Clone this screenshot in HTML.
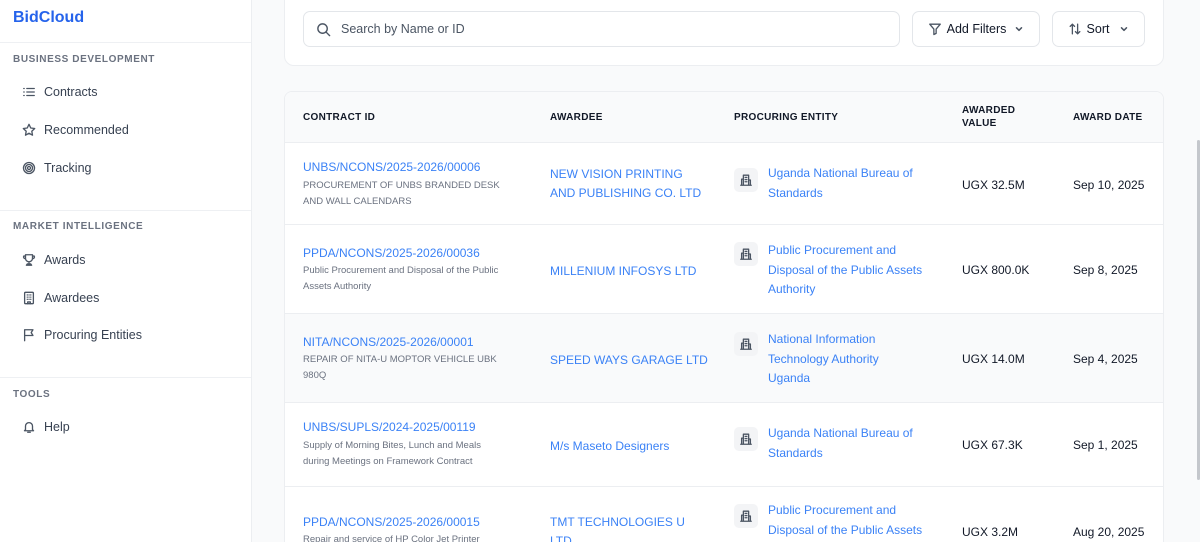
<!DOCTYPE html>
<html><head><meta charset="utf-8"><style>
*{box-sizing:border-box;margin:0;padding:0}
html,body{width:1200px;height:542px;overflow:hidden}
body{background:#f9fafb;font-family:"Liberation Sans",sans-serif;color:#111827;position:relative}
.sb{position:absolute;left:0;top:0;width:252px;height:542px;background:#fff;border-right:1px solid #eceef1}
.logo{position:absolute;left:13px;top:9px;font-size:16px;font-weight:700;color:#2563eb}
.hr{position:absolute;left:0;width:251px;height:1px;background:#eef0f3}
.lab{position:absolute;left:13px;font-size:10px;font-weight:700;color:#6b7280;letter-spacing:.6px}
.it{position:absolute;left:22px;font-size:12.5px;color:#374151;display:flex;align-items:center}
.it svg{width:14px;height:14px;margin-right:8px;stroke:#4b5563;fill:none;stroke-width:1.5;stroke-linecap:round;stroke-linejoin:round}
.top{position:absolute;left:284px;top:-10px;width:880px;height:76px;background:#fff;border:1px solid #eceef1;border-radius:10px}
.inp{position:absolute;left:303px;top:11px;width:597px;height:36px;border:1px solid #e3e6ea;border-radius:7px;background:#fff;font-size:12.5px;color:#4b5563;display:flex;align-items:center;padding-left:37px}
.btn{position:absolute;top:11px;height:36px;border:1px solid #e3e6ea;border-radius:7px;background:#fff;font-size:12.5px;color:#111827;display:flex;align-items:center;justify-content:center}
svg.i{fill:none;stroke:#4b5563;stroke-width:1.5;stroke-linecap:round;stroke-linejoin:round}
.tbl{position:absolute;left:284px;top:91px;width:880px;height:451px;background:#fff;border:1px solid #eceef1;border-bottom:0;border-radius:8px 8px 0 0;overflow:hidden}
.th{position:absolute;left:0;top:0;width:880px;height:51px;background:#f9fafb;border-bottom:1px solid #eceef1}
.h{position:absolute;font-size:10px;font-weight:700;color:#111827;letter-spacing:.3px;line-height:12.5px}
.row{position:absolute;left:0;width:880px;border-bottom:1px solid #eceef1}
.c{position:absolute;white-space:nowrap}
.id{font-size:12px;color:#3b82f6;left:18px}
.ds{font-size:9.5px;color:#6b7280;line-height:15.5px;left:18px}
.aw{left:265px;font-size:12px;color:#3b82f6;line-height:19px}
.ic{left:449px;width:24px;height:24px;background:#f3f4f6;border-radius:5px}
.ic svg{position:absolute;left:5px;top:5px}
.en{left:483px;font-size:12px;color:#3b82f6;line-height:19.5px}
.v{left:677px;font-size:12px;color:#111827}
.d{left:788px;font-size:12px;color:#111827}
</style></head><body>
<div class="sb">
<div class="logo">BidCloud</div>
<div class="hr" style="top:42px"></div>
<div class="lab" style="top:54px">BUSINESS DEVELOPMENT</div>
<div class="it" style="top:85px"><svg viewBox="0 0 16 16"><path d="M2 4h.5M2 8h.5M2 12h.5M5.5 4H14M5.5 8H14M5.5 12H14"/></svg>Contracts</div>
<div class="it" style="top:123px"><svg viewBox="0 0 16 16"><path d="M8 1.5l2 4.2 4.5.6-3.3 3.1.8 4.5L8 11.7 4 13.9l.8-4.5L1.5 6.3l4.5-.6z"/></svg>Recommended</div>
<div class="it" style="top:161px"><svg viewBox="0 0 16 16"><circle cx="8" cy="8" r="6.3"/><circle cx="8" cy="8" r="4"/><circle cx="8" cy="8" r="1.7"/></svg>Tracking</div>
<div class="hr" style="top:210px"></div>
<div class="lab" style="top:221px">MARKET INTELLIGENCE</div>
<div class="it" style="top:253px"><svg viewBox="0 0 16 16"><path d="M4 2h8v4a4 4 0 0 1-8 0zM4 3.5H2a2 2 0 0 0 2 3M12 3.5h2a2 2 0 0 1-2 3M8 10v2.5M5 14h6l-1-1.5H6z"/></svg>Awards</div>
<div class="it" style="top:291px"><svg viewBox="0 0 16 16"><rect x="3" y="1.5" width="10" height="13" rx="1"/><path d="M6 4.5h.1M8 4.5h.1M10 4.5h.1M6 7h.1M8 7h.1M10 7h.1M6 9.5h.1M8 9.5h.1M10 9.5h.1M6.5 14.5v-2h3v2"/></svg>Awardees</div>
<div class="it" style="top:328px"><svg viewBox="0 0 16 16"><path d="M3 14.5V2h9.5l-2 3.3 2 3.3H3"/></svg>Procuring Entities</div>
<div class="hr" style="top:377px"></div>
<div class="lab" style="top:389px">TOOLS</div>
<div class="it" style="top:420px"><svg viewBox="0 0 16 16"><path d="M4 11V7a4 4 0 0 1 8 0v4l1.2 1.3H2.8zM6.5 14h3"/></svg>Help</div>
</div>

<div class="top"></div>
<div class="inp"><svg class="i" style="position:absolute;left:12px;top:10px" width="15" height="15" viewBox="0 0 16 16"><circle cx="7" cy="7" r="5"/><path d="M11 11l3.5 3.5"/></svg>Search by Name or ID</div>
<div class="btn" style="left:912px;width:128px"><svg class="i" width="14" height="14" viewBox="0 0 16 16" style="margin-right:5px"><path d="M2 2.5h12l-4.7 5.6V13l-2.6 1.3V8.1z"/></svg>Add Filters<svg class="i" width="10" height="10" viewBox="0 0 10 10" style="margin-left:8px"><path d="M2.5 3.8L5 6.3l2.5-2.5"/></svg></div>
<div class="btn" style="left:1052px;width:93px"><svg class="i" width="14" height="14" viewBox="0 0 16 16" style="margin-right:5px"><path d="M5 13.5V2.5M2.5 5L5 2.5 7.5 5M11 2.5v11M8.5 11l2.5 2.5 2.5-2.5"/></svg>Sort<svg class="i" width="10" height="10" viewBox="0 0 10 10" style="margin-left:10px"><path d="M2.5 3.8L5 6.3l2.5-2.5"/></svg></div>

<div class="tbl">
<div class="th">
<div class="h" style="left:18px;top:20px">CONTRACT ID</div>
<div class="h" style="left:265px;top:20px">AWARDEE</div>
<div class="h" style="left:449px;top:20px">PROCURING ENTITY</div>
<div class="h" style="left:677px;top:13px">AWARDED<br>VALUE</div>
<div class="h" style="left:788px;top:20px">AWARD DATE</div>
</div>

<div class="row" style="top:51px;height:82px">
<div class="c id" style="top:17px">UNBS/NCONS/2025-2026/00006</div>
<div class="c ds" style="top:35px">PROCUREMENT OF UNBS BRANDED DESK<br>AND WALL CALENDARS</div>
<div class="c aw" style="top:22px">NEW VISION PRINTING<br>AND PUBLISHING CO. LTD</div>
<div class="c ic" style="top:25px"><svg class="i" width="14" height="14" viewBox="0 0 16 16"><path d="M5 14V2.5h6V14M3 14V7h2M11 8h2v6M2 14h12M7 5h2M7 7.5h2M7 10h2"/></svg></div>
<div class="c en" style="top:21px">Uganda National Bureau of<br>Standards</div>
<div class="c v" style="top:35px">UGX 32.5M</div>
<div class="c d" style="top:35px">Sep 10, 2025</div>
</div>

<div class="row" style="top:133px;height:89px">
<div class="c id" style="top:21px">PPDA/NCONS/2025-2026/00036</div>
<div class="c ds" style="top:38px">Public Procurement and Disposal of the Public<br>Assets Authority</div>
<div class="c aw" style="top:37px">MILLENIUM INFOSYS LTD</div>
<div class="c ic" style="top:17px"><svg class="i" width="14" height="14" viewBox="0 0 16 16"><path d="M5 14V2.5h6V14M3 14V7h2M11 8h2v6M2 14h12M7 5h2M7 7.5h2M7 10h2"/></svg></div>
<div class="c en" style="top:16px">Public Procurement and<br>Disposal of the Public Assets<br>Authority</div>
<div class="c v" style="top:38px">UGX 800.0K</div>
<div class="c d" style="top:38px">Sep 8, 2025</div>
</div>

<div class="row" style="top:222px;height:89px;background:#f9fafb">
<div class="c id" style="top:21px">NITA/NCONS/2025-2026/00001</div>
<div class="c ds" style="top:38px">REPAIR OF NITA-U MOPTOR VEHICLE UBK<br>980Q</div>
<div class="c aw" style="top:37px">SPEED WAYS GARAGE LTD</div>
<div class="c ic" style="top:18px"><svg class="i" width="14" height="14" viewBox="0 0 16 16"><path d="M5 14V2.5h6V14M3 14V7h2M11 8h2v6M2 14h12M7 5h2M7 7.5h2M7 10h2"/></svg></div>
<div class="c en" style="top:16px">National Information<br>Technology Authority<br>Uganda</div>
<div class="c v" style="top:38px">UGX 14.0M</div>
<div class="c d" style="top:38px">Sep 4, 2025</div>
</div>

<div class="row" style="top:311px;height:84px">
<div class="c id" style="top:17px">UNBS/SUPLS/2024-2025/00119</div>
<div class="c ds" style="top:35px">Supply of Morning Bites, Lunch and Meals<br>during Meetings on Framework Contract</div>
<div class="c aw" style="top:34px">M/s Maseto Designers</div>
<div class="c ic" style="top:24px"><svg class="i" width="14" height="14" viewBox="0 0 16 16"><path d="M5 14V2.5h6V14M3 14V7h2M11 8h2v6M2 14h12M7 5h2M7 7.5h2M7 10h2"/></svg></div>
<div class="c en" style="top:21px">Uganda National Bureau of<br>Standards</div>
<div class="c v" style="top:35px">UGX 67.3K</div>
<div class="c d" style="top:35px">Sep 1, 2025</div>
</div>

<div class="row" style="top:395px;height:90px">
<div class="c id" style="top:28px">PPDA/NCONS/2025-2026/00015</div>
<div class="c ds" style="top:45px">Repair and service of HP Color Jet Printer</div>
<div class="c aw" style="top:26px">TMT TECHNOLOGIES U<br>LTD</div>
<div class="c ic" style="top:17px"><svg class="i" width="14" height="14" viewBox="0 0 16 16"><path d="M5 14V2.5h6V14M3 14V7h2M11 8h2v6M2 14h12M7 5h2M7 7.5h2M7 10h2"/></svg></div>
<div class="c en" style="top:14px">Public Procurement and<br>Disposal of the Public Assets<br>Authority</div>
<div class="c v" style="top:38px">UGX 3.2M</div>
<div class="c d" style="top:38px">Aug 20, 2025</div>
</div>
</div>
<div style="position:absolute;left:1197px;top:140px;width:3px;height:340px;background:#c4c7cc;border-radius:2px"></div>
</body></html>
